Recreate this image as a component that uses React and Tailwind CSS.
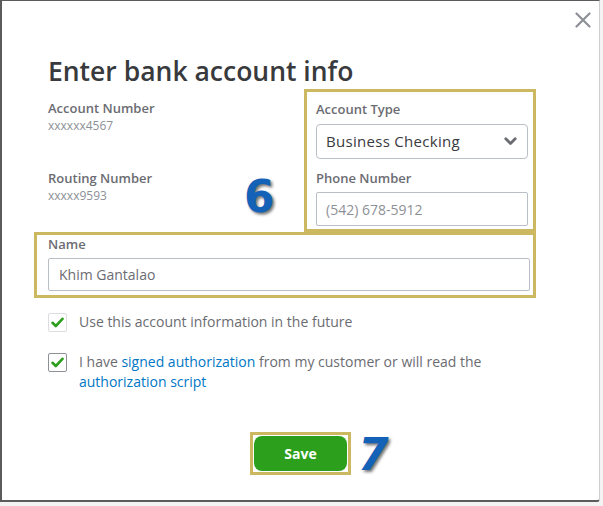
import React from "react";

function Check() {
  return (
    <svg width="13" height="11" viewBox="0 0 13 11" fill="none">
      <path d="M1.5 5.8 L4.8 9 L11.5 1.8" stroke="#2ca01c" strokeWidth="2.6" strokeLinecap="round" strokeLinejoin="round" />
    </svg>
  );
}

export default function App() {
  const font = { fontFamily: '"Open Sans", "Liberation Sans", sans-serif' };
  return (
    <div className="w-[603px] h-[506px] bg-[#f3f3f3] overflow-hidden" style={font}>
      <div className="relative w-[600px] h-[502px] bg-white border-l-2 border-t border-b-2 border-[#5b5b5b] border-r border-r-[#cfcfcf] rounded-br-[3px]">
        <button className="absolute right-[8px] top-[11px] text-[#8d9096]" aria-label="close">
          <svg width="16" height="16" viewBox="0 0 16 16">
            <path d="M1.5 1.5 L14.5 14.5 M14.5 1.5 L1.5 14.5" stroke="#8d9096" strokeWidth="2.2" strokeLinecap="round" />
          </svg>
        </button>
        <div className="pl-[32px] w-[534px] pt-[54px]">
          <h1 className="pl-[14px] text-[26.5px] leading-[32px] font-semibold text-[#393a3d]">Enter bank account info</h1>
          <div className="mt-[2px] flex">
            <div className="relative flex-1 pl-[14px] pt-[10px]">
              <div className="text-[13px] leading-[18px] font-semibold text-[#6b6c72]">Account Number</div>
              <div className="text-[12px] leading-[18px] text-[#8d9096]">xxxxxx4567</div>
              <div className="mt-[34px] text-[13px] leading-[18px] font-semibold text-[#6b6c72]">Routing Number</div>
              <div className="text-[12px] leading-[18px] text-[#8d9096]">xxxxx9593</div>
              <span
                className="absolute left-[210px] top-[86px] text-[44px] leading-[44px] font-bold text-[#1462b8] [-webkit-text-stroke:1.5px_white] [paint-order:stroke_fill] [text-shadow:2px_2px_3px_rgba(0,0,0,0.55)]"
                style={{ fontFamily: '"DejaVu Sans", sans-serif' }}
              >
                6
              </span>
            </div>
            <div className="w-[232px] border-[3px] border-[#cdb862] pl-[9px] pr-[2px] pt-[8px] pb-[3px]">
              <div className="text-[13px] leading-[18px] font-semibold text-[#6b6c72]">Account Type</div>
              <div className="mt-[6px] h-[35px] w-[212px] rounded-[4px] border border-[#babec5] flex items-center justify-between pl-[9px] pr-[10px]">
                <span className="text-[15px] tracking-[0.3px] text-[#393a3d]">Business Checking</span>
                <svg width="13" height="9" viewBox="0 0 13 9">
                  <path d="M1.8 1.8 L6.5 6.5 L11.2 1.8" stroke="#6b6c72" strokeWidth="2.8" fill="none" strokeLinecap="round" strokeLinejoin="round" />
                </svg>
              </div>
              <div className="mt-[10px] text-[13px] leading-[18px] font-semibold text-[#6b6c72]">Phone Number</div>
              <div className="mt-[5px] h-[34px] w-[212px] rounded-[2px] border border-[#babec5] flex items-center pl-[9px]">
                <span className="text-[14px] text-[#8d9096]">(542) 678-5912</span>
              </div>
            </div>
          </div>
          <div className="w-[502px] border-[3px] border-[#cdb862] pl-[11px] pr-[1px] pb-[4px]">
            <div className="text-[13px] leading-[18px] font-semibold text-[#6b6c72]">Name</div>
            <div className="mt-[5px] h-[33px] w-[482px] rounded-[2px] border border-[#babec5] flex items-center pl-[10px]">
              <span className="text-[14px] text-[#6b6c72]">Khim Gantalao</span>
            </div>
          </div>
          <div className="pl-[14px] mt-[14px] flex items-start gap-[12px]">
            <div className="mt-[1px] w-[19px] h-[19px] rounded-[2px] border border-[#dcdde0] flex items-center justify-center">
              <Check />
            </div>
            <div className="text-[14px] leading-[20px] font-medium text-[#6b6c72]">Use this account information in the future</div>
          </div>
          <div className="pl-[14px] mt-[20px] flex items-start gap-[12px]">
            <div className="mt-[1px] w-[19px] h-[19px] rounded-[2px] border border-[#8d9096] flex items-center justify-center">
              <Check />
            </div>
            <div className="text-[14px] leading-[20px] font-medium text-[#6b6c72]">
              I have <span className="text-[#0077c5]">signed authorization</span> from my customer or will read the
              <br />
              <span className="text-[#0077c5]">authorization script</span>
            </div>
          </div>
        </div>
        <div className="mt-[40px] flex justify-center">
          <div className="relative border-[3px] border-[#cdb862] p-px">
            <button className="w-[93px] h-[35px] rounded-[8px] bg-[#2ca01c] text-white text-[14px] font-bold">Save</button>
            <span
              className="absolute left-[105px] top-[-2px] text-[44px] leading-[44px] font-bold italic text-[#1462b8] [-webkit-text-stroke:1.5px_white] [paint-order:stroke_fill] [text-shadow:2px_2px_3px_rgba(0,0,0,0.55)]"
              style={{ fontFamily: '"DejaVu Sans", sans-serif' }}
            >
              7
            </span>
          </div>
        </div>
      </div>
    </div>
  );
}
